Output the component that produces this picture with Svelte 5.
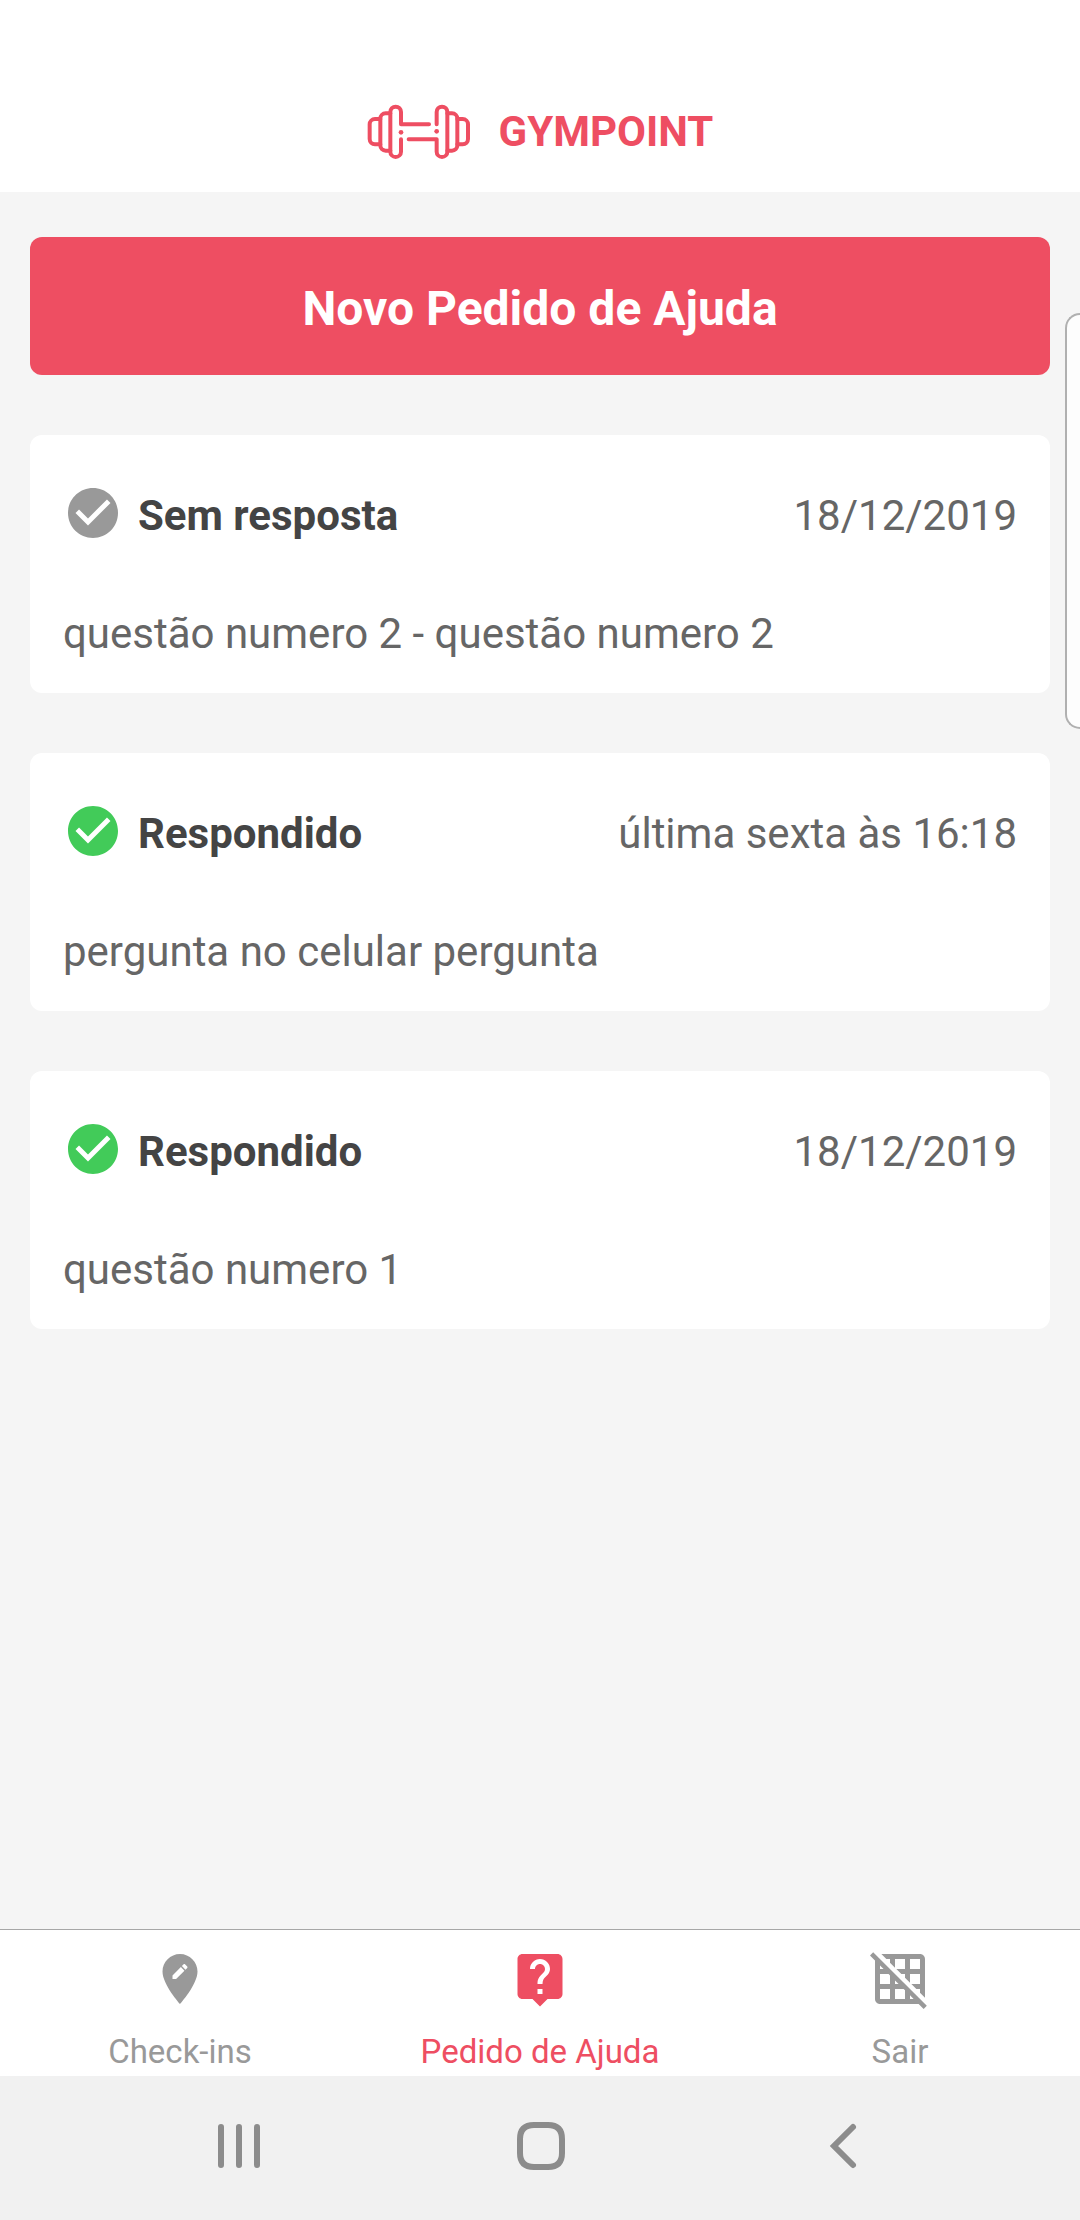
<script>
  const requests = [
    { status: 'Sem resposta', answered: false, date: '18/12/2019', text: 'questão numero 2 - questão numero 2' },
    { status: 'Respondido', answered: true, date: 'última sexta às 16:18', text: 'pergunta no celular pergunta' },
    { status: 'Respondido', answered: true, date: '18/12/2019', text: 'questão numero 1' },
  ];

  const tabs = [
    {
      label: 'Check-ins',
      href: '#check-ins',
      active: false,
      icon: 'M12 2C8.14 2 5 5.14 5 9c0 5.25 7 13 7 13s7-7.75 7-13c0-3.86-3.14-7-7-7zm-1.56 10H9v-1.44l3.35-3.34 1.43 1.43L10.44 12zm4.45-4.45l-.7.7-1.44-1.44.7-.7c.15-.15.39-.15.54 0l.9.9c.15.15.15.39 0 .54z',
    },
    {
      label: 'Pedido de Ajuda',
      href: '#ajuda',
      active: true,
      icon: 'M19 2H5c-1.11 0-2 .9-2 2v14c0 1.1.89 2 2 2h4l3 3 3-3h4c1.1 0 2-.9 2-2V4c0-1.1-.9-2-2-2zm-6 16h-2v-2h2v2zm2.07-7.75l-.9.92C13.45 11.9 13 12.5 13 14h-2v-.5c0-1.1.45-2.1 1.17-2.83l1.24-1.26c.37-.36.59-.86.59-1.41 0-1.1-.9-2-2-2s-2 .9-2 2H8c0-2.21 1.79-4 4-4s4 1.79 4 4c0 .88-.36 1.68-.93 2.25z',
    },
    {
      label: 'Sair',
      href: '#sair',
      active: false,
      icon: 'M8 4v1.45l2 2V4h4v4h-3.45l2 2H14v1.45l2 2V10h4v4h-3.45l2 2H20v1.45l2 2V4c0-1.1-.9-2-2-2H4.55l2 2H8zm8 0h4v4h-4V4zM1.27 1.27L0 2.55l2 2V20c0 1.1.9 2 2 2h15.46l2 2 1.27-1.27L1.27 1.27zM10 12.55L11.45 14H10v-1.45zm-6-6L5.45 8H4V6.55zM8 20H4v-4h4v4zm0-6H4v-4h3.45l.55.55V14zm6 6h-4v-4h3.45l.55.54V20zm2 0v-1.46L17.46 20H16z',
    },
  ];
</script>

<div class="app">
  <header class="header">
    <svg class="logo" viewBox="48 42 312 168" aria-hidden="true">
      <g fill="none" stroke="currentColor" stroke-width="12" stroke-linecap="round" stroke-linejoin="round">
        <path d="M88 87H72a16 16 0 0 0-16 16v44a16 16 0 0 0 16 16h16" />
        <path d="M118 70H104a16 16 0 0 0-16 16v80a16 16 0 0 0 16 16h14" />
        <path d="M150 148v37a16 16 0 0 1-32 0V66a16 16 0 0 1 32 0v37H234" />
        <path d="M257 103V66a16 16 0 0 1 32 0v119a16 16 0 0 1-32 0v-37H173" />
        <path d="M289 70h14a16 16 0 0 1 16 16v80a16 16 0 0 1-16 16h-14" />
        <path d="M319 87h16a16 16 0 0 1 16 16v44a16 16 0 0 1-16 16h-16" />
      </g>
      <circle cx="150" cy="127" r="7" fill="currentColor" />
      <circle cx="257" cy="124" r="7" fill="currentColor" />
    </svg>
    <h1 class="brand">GYMPOINT</h1>
  </header>

  <main class="content">
    <button class="new-request" type="button">Novo Pedido de Ajuda</button>

    <ul class="requests">
      {#each requests as request}
        <li class="card">
          <div class="card-head">
            <svg class="icon check" class:answered={request.answered} viewBox="0 0 24 24" aria-hidden="true">
              <path
                fill="currentColor"
                d="M12 2C6.48 2 2 6.48 2 12s4.48 10 10 10 10-4.48 10-10S17.52 2 12 2zm-2 15l-5-5 1.41-1.41L10 14.17l7.59-7.59L19 8l-9 9z"
              />
            </svg>
            <strong class="status">{request.status}</strong>
            <span class="date">{request.date}</span>
          </div>
          <p class="question">{request.text}</p>
        </li>
      {/each}
    </ul>
  </main>

  <nav class="tabs" aria-label="Principal">
    {#each tabs as tab}
      <a class="tab" class:active={tab.active} href={tab.href} aria-current={tab.active ? 'page' : undefined}>
        <svg class="icon" viewBox="0 0 24 24" aria-hidden="true"><path fill="currentColor" d={tab.icon} /></svg>
        <span>{tab.label}</span>
      </a>
    {/each}
  </nav>

  <div class="system-bar">
    <button type="button" aria-label="Recentes">
      <svg class="system-icon" viewBox="0 0 48 48" aria-hidden="true">
        <path d="M6 5v38M24 5v38M42 5v38" />
      </svg>
    </button>
    <button type="button" aria-label="Início">
      <svg class="system-icon" viewBox="0 0 48 48" aria-hidden="true">
        <path d="M17 3H31Q45 3 45 17V31Q45 45 31 45H17Q3 45 3 31V17Q3 3 17 3z" />
      </svg>
    </button>
    <button type="button" aria-label="Voltar">
      <svg class="system-icon" viewBox="0 0 48 48" aria-hidden="true">
        <path d="M34 5L15 24L34 43" />
      </svg>
    </button>
  </div>

  <div class="edge-handle"></div>
</div>

<style>
  :global(body) {
    margin: 0;
  }

  .app {
    position: relative;
    display: flex;
    flex-direction: column;
    min-height: 100vh;
    background: #f5f5f5;
    font-family: Roboto, 'Noto Sans', sans-serif;
  }

  .header {
    display: flex;
    align-items: center;
    justify-content: center;
    gap: 28px;
    min-height: 120px;
    padding-top: 72px;
    background: #fff;
    color: #ee4e62;
  }

  .logo {
    width: 104px;
    height: 56px;
  }

  .brand {
    margin: 0;
    font-size: 42px;
    line-height: 50px;
    font-weight: 700;
  }

  .content {
    flex: 1;
    padding: 45px 30px 60px;
  }

  .new-request {
    display: block;
    width: 100%;
    padding: 44px 30px 38px;
    border: 0;
    border-radius: 12px;
    background: #ee4e62;
    color: #fff;
    font-family: inherit;
    font-size: 48px;
    font-weight: 700;
    line-height: 56px;
  }

  .requests {
    display: grid;
    gap: 60px;
    margin: 60px 0 0;
    padding: 0;
    list-style: none;
  }

  .card {
    padding: 48px 33px 34px;
    border-radius: 12px;
    background: #fff;
    font-size: 42px;
    line-height: 50px;
  }

  .card-head {
    display: flex;
    align-items: center;
    gap: 15px;
    min-height: 66px;
  }

  .icon {
    display: block;
    flex: none;
    width: 60px;
    height: 60px;
  }

  .check {
    align-self: flex-start;
    color: #999;
  }

  .check.answered {
    color: #42cb59;
  }

  .status {
    color: #444;
    font-weight: 700;
  }

  .date {
    margin-left: auto;
    color: #666;
  }

  .question {
    margin: 60px 0 0;
    color: #666;
  }

  .tabs {
    display: grid;
    grid-template-columns: repeat(3, 1fr);
    border-top: 1px solid #a7a7a7;
    background: #fff;
  }

  .tab {
    display: flex;
    flex-direction: column;
    align-items: center;
    gap: 24px;
    padding: 19px 0 5px;
    color: #999;
    font-size: 33px;
    line-height: 38px;
    text-decoration: none;
  }

  .tab.active {
    color: #ee4e62;
  }

  .system-bar {
    display: grid;
    grid-template-columns: repeat(3, 1fr);
    padding: 0 86px 0 88px;
    background: #f1f1f1;
  }

  .system-bar button {
    display: flex;
    justify-content: center;
    padding: 46px 0 50px;
    border: 0;
    background: none;
    color: #8c8c8c;
  }

  .system-icon {
    width: 48px;
    height: 48px;
    fill: none;
    stroke: currentColor;
    stroke-width: 6;
    stroke-linecap: round;
  }

  .edge-handle {
    position: absolute;
    top: 313px;
    right: 0;
    box-sizing: border-box;
    width: 15px;
    height: 416px;
    border: 2px solid #b0b0b0;
    border-right: 0;
    border-radius: 18px 0 0 18px;
    background: #fdfdfd;
  }
</style>
